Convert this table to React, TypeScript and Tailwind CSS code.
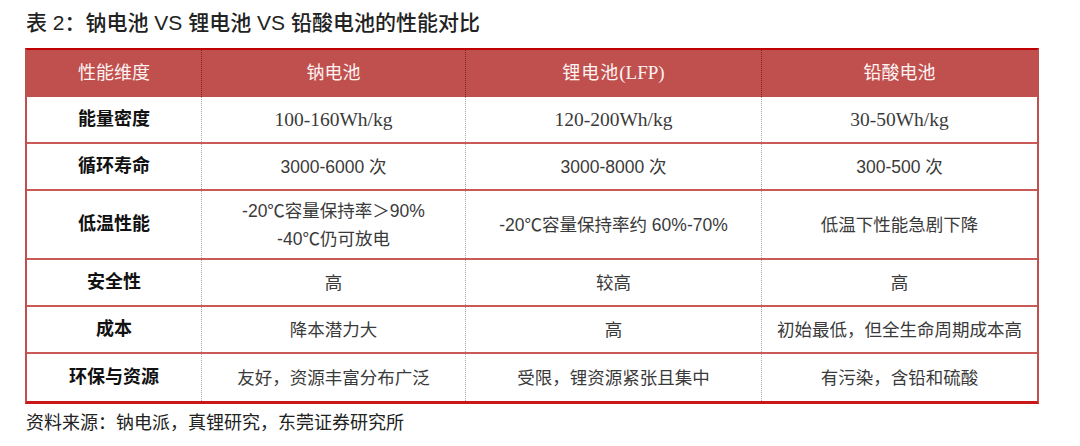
const rows: { label: string; cells: string[]; tall?: boolean; serif?: boolean }[] = [
  { label: "能量密度", cells: ["100-160Wh/kg", "120-200Wh/kg", "30-50Wh/kg"], serif: true },
  { label: "循环寿命", cells: ["3000-6000 次", "3000-8000 次", "300-500 次"] },
  {
    label: "低温性能",
    cells: ["-20℃容量保持率＞90%\n-40℃仍可放电", "-20℃容量保持率约 60%-70%", "低温下性能急剧下降"],
    tall: true,
  },
  { label: "安全性", cells: ["高", "较高", "高"] },
  { label: "成本", cells: ["降本潜力大", "高", "初始最低，但全生命周期成本高"] },
  { label: "环保与资源", cells: ["友好，资源丰富分布广泛", "受限，锂资源紧张且集中", "有污染，含铅和硫酸"] },
];

const colW = ["w-[264px]", "w-[296px]", "flex-1"];

export default function App() {
  return (
    <div className="w-[1080px] h-[446px] bg-white font-['Liberation_Sans','Noto_Sans_CJK_SC',sans-serif] text-[#333]">
      <h1 className="pt-[10px] pl-[26px] text-[21px] leading-[26px] font-medium text-[#222]">
        表 2：钠电池 VS 锂电池 VS 铅酸电池的性能对比
      </h1>

      <div className="ml-[25px] mt-[12px] w-[1014px] border-x-2 border-x-[#c0504d] border-t-[2px] border-t-[#c00000] border-b-[3px] border-b-[#c81818]">
        {/* header */}
        <div className="flex h-[47px] bg-[#c0504d] text-[18px] text-[#fdf3f2]">
          <div className="w-[174px] flex items-center justify-center">性能维度</div>
          <div className="w-[264px] flex items-center justify-center border-l border-dotted border-l-[#7a2624]">
            钠电池
          </div>
          <div className="w-[296px] flex items-center justify-center border-l border-dotted border-l-[#7a2624] tracking-[1px]">
            锂电池<span className="font-['Liberation_Serif','Noto_Sans_CJK_SC',serif] text-[19px] tracking-normal">(LFP)</span>
          </div>
          <div className="flex-1 flex items-center justify-center border-l border-dotted border-l-[#7a2624]">
            铅酸电池
          </div>
        </div>

        {rows.map((r, i) => (
          <div
            key={r.label}
            className={`flex ${r.tall ? "h-[69px]" : "h-[47px]"} ${
              i < rows.length - 1 ? "border-b-2 border-b-[#c95a57]" : ""
            }`}
          >
            <div className="w-[174px] flex items-center justify-center text-[18px] font-bold text-[#111]">
              {r.label}
            </div>
            {r.cells.map((c, j) => (
              <div
                key={j}
                className={`${colW[j]} flex flex-col items-center justify-center border-l border-dotted border-l-[#a8a8a8] leading-[28px] text-[#3a3a3a] ${
                  r.serif ? "font-['Liberation_Serif','Noto_Sans_CJK_SC',serif] text-[19.5px]" : "text-[17.5px]"
                }`}
              >
                {c.split("\n").map((line) => (
                  <span key={line}>{line}</span>
                ))}
              </div>
            ))}
          </div>
        ))}
      </div>

      <p className="mt-[7px] pl-[26px] text-[18px] leading-[24px] text-[#222]">
        资料来源：钠电派，真锂研究，东莞证券研究所
      </p>
    </div>
  );
}
